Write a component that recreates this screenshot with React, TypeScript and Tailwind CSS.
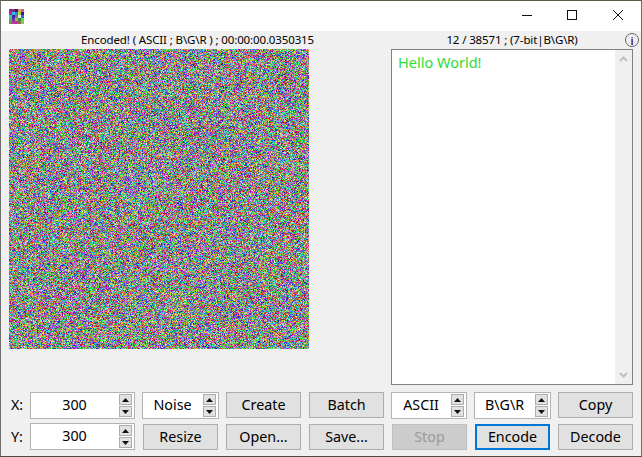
import { useEffect, useRef } from 'react'

const iconColors = [
  ['#a0229b', '#7a2f8f', '#3f1a63', '#d8a070', '#c8609a'],
  ['#b020c0', '#30c0d8', '#3a78e0', '#a0e020', '#4a1090'],
  ['#30d0a0', '#4020a0', '#8a6a8a', '#e0e8e8', '#3070c0'],
  ['#40c070', '#7030b0', '#a0c030', '#2a8a50', '#70d040'],
  ['#7a9030', '#b040a0', '#b04090', '#a06060', '#80d040'],
]

function Noise() {
  const ref = useRef<HTMLCanvasElement>(null)
  useEffect(() => {
    const ctx = ref.current?.getContext('2d')
    if (!ctx) return
    const img = ctx.createImageData(300, 300)
    let s = 12345
    const rnd = () => {
      s = (s * 1664525 + 1013904223) >>> 0
      return (s >>> 8) / 16777216
    }
    // mostly saturated colours, a few greys
    for (let i = 0; i < img.data.length; i += 4) {
      const h = rnd() * 6
      const sat = rnd() < 0.05 ? rnd() * 0.2 : 0.4 + rnd() * 0.6
      const v = 0.62 + rnd() * 0.38
      const f = h - Math.floor(h)
      const p = v * (1 - sat)
      const q = v * (1 - sat * f)
      const t = v * (1 - sat * (1 - f))
      const rgb = [
        [v, t, p],
        [q, v, p],
        [p, v, t],
        [p, q, v],
        [t, p, v],
        [v, p, q],
      ][Math.floor(h) % 6]
      img.data[i] = rgb[0] * 255
      img.data[i + 1] = rgb[1] * 255
      img.data[i + 2] = rgb[2] * 255
      img.data[i + 3] = 255
    }
    ctx.putImageData(img, 0, 0)
  }, [])
  return <canvas ref={ref} width={300} height={300} className="block h-[300px] w-[300px]" />
}

function Spin() {
  return (
    <div className="flex w-[13px] shrink-0 flex-col gap-[1px]">
      <div className="flex h-[11px] items-center justify-center border border-[#adadad] bg-[#e1e1e1]">
        <svg width="7" height="4" viewBox="0 0 7 4"><path d="M3.5 0L7 4H0z" fill="#111" /></svg>
      </div>
      <div className="flex h-[11px] items-center justify-center border border-[#adadad] bg-[#e1e1e1]">
        <svg width="7" height="4" viewBox="0 0 7 4"><path d="M0 0H7L3.5 4z" fill="#111" /></svg>
      </div>
    </div>
  )
}

function Field({ value, className = '' }: { value: string; className?: string }) {
  return (
    <div className={`flex h-[27px] items-center border border-[#b4b4b4] bg-white pr-[2px] ${className}`}>
      <div className="flex-1 pr-[1px] text-center leading-none">{value}</div>
      <Spin />
    </div>
  )
}

function Btn({ children, className = 'border border-[#adadad] bg-[#e1e1e1]' }: { children: string; className?: string }) {
  return (
    <button className={`flex h-[26px] w-[75px] items-center justify-center leading-none ${className}`}>
      {children}
    </button>
  )
}

export default function App() {
  return (
    <div
      className="flex h-[457px] w-[642px] flex-col overflow-hidden border-x border-b border-t border-x-[#6f6f6f] border-b-[#4a4a4a] border-t-[#5a5a4a] bg-[#f0f0f0] text-[14.3px] text-black"
      style={{ fontFamily: '"Noto Sans", sans-serif' }}
    >
      <div className="flex h-[30px] shrink-0 items-center justify-between bg-white">
        <svg width="15" height="15" viewBox="0 0 5 5" className="ml-[8px] mt-[1px]" shapeRendering="crispEdges">
          {iconColors.map((row, y) =>
            row.map((c, x) => <rect key={`${x}-${y}`} x={x} y={y} width="1" height="1" fill={c} />),
          )}
        </svg>
        <div className="flex h-full pb-[2px]">
          <div className="flex w-[46px] items-center justify-center pl-px">
            <svg width="10" height="10" viewBox="0 0 10 10"><path d="M0 5.5H10" stroke="#111" /></svg>
          </div>
          <div className="flex w-[46px] items-center justify-center">
            <svg width="10" height="10" viewBox="0 0 10 10"><rect x="0.5" y="0.5" width="9" height="9" fill="none" stroke="#111" /></svg>
          </div>
          <div className="flex w-[46px] items-center justify-center">
            <svg width="10" height="10" viewBox="0 0 10 10"><path d="M0 0L10 10M10 0L0 10" stroke="#111" /></svg>
          </div>
        </div>
      </div>

      <div className="flex h-[18px] shrink-0 items-center text-[11.5px] leading-none tracking-[-0.13px]">
        <div className="w-[313px] whitespace-nowrap text-right">Encoded! ( ASCII ; B\G\R ) ; 00:00:00.0350315</div>
        <div className="ml-[77px] w-[242px] whitespace-nowrap text-center">12 / 38571 ; (7-bit|B\G\R)</div>
        <div className="-ml-[8px] flex h-[14px] w-[14px] items-center justify-center rounded-full border border-[#666] text-[11px] font-semibold text-[#4a1050]">
          i
        </div>
      </div>

      <div className="flex h-[336px] shrink-0 pl-[8px]">
        <div className="w-[382px]">
          <Noise />
        </div>
        <div className="flex w-[242px] border border-[#828282] bg-white">
          <div className="flex-1 pl-[6px] pt-[2px] text-[14.5px] leading-5 text-[#2fdc36]">Hello World!</div>
          <div className="flex w-[17px] flex-col items-center justify-between bg-[#f0f0f0] py-[6px]">
            <svg width="9" height="6" viewBox="0 0 9 6"><path d="M1 5L4.5 1.5L8 5" fill="none" stroke="#c0c0c0" strokeWidth="2" /></svg>
            <svg width="9" height="6" viewBox="0 0 9 6"><path d="M1 1L4.5 4.5L8 1" fill="none" stroke="#c0c0c0" strokeWidth="2" /></svg>
          </div>
        </div>
      </div>

      <div className="mt-[7px] grid grid-cols-[14px_105px_77px_76px_75px_76px_77px_75px] grid-rows-[26px_26px] gap-x-[7px] gap-y-[6px] pl-[8px]">
        <div className="flex items-center justify-center pl-[2px] leading-none">X:</div>
        <Field value="300" />
        <Field value="Noise" />
        <Btn>Create</Btn>
        <Btn>Batch</Btn>
        <Field value="ASCII" />
        <Field value="B\G\R" />
        <Btn>Copy</Btn>

        <div className="flex items-center justify-center pl-[2px] leading-none">Y:</div>
        <Field value="300" className="-mt-px" />
        <Btn className="ml-px border border-[#adadad] bg-[#e1e1e1]">Resize</Btn>
        <Btn>Open...</Btn>
        <Btn>Save...</Btn>
        <Btn className="ml-px border border-[#bfbfbf] bg-[#cccccc] text-[#9a9a9a]">Stop</Btn>
        <Btn className="ml-px border-2 border-[#0078d7] bg-[#e1e1e1]">Encode</Btn>
        <Btn>Decode</Btn>
      </div>
    </div>
  )
}
